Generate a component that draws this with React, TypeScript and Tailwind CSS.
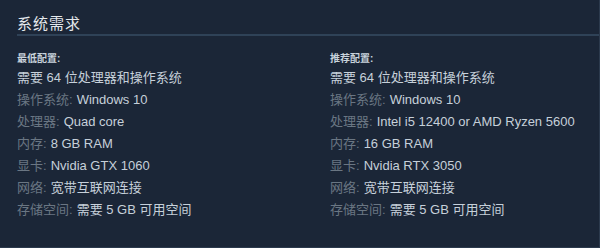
import React from 'react';

type Spec = { label?: string; value: string };

const minimum: Spec[] = [
  { value: '需要 64 位处理器和操作系统' },
  { label: '操作系统:', value: 'Windows 10' },
  { label: '处理器:', value: 'Quad core' },
  { label: '内存:', value: '8 GB RAM' },
  { label: '显卡:', value: 'Nvidia GTX 1060' },
  { label: '网络:', value: '宽带互联网连接' },
  { label: '存储空间:', value: '需要 5 GB 可用空间' },
];

const recommended: Spec[] = [
  { value: '需要 64 位处理器和操作系统' },
  { label: '操作系统:', value: 'Windows 10' },
  { label: '处理器:', value: 'Intel i5 12400 or AMD Ryzen 5600' },
  { label: '内存:', value: '16 GB RAM' },
  { label: '显卡:', value: 'Nvidia RTX 3050' },
  { label: '网络:', value: '宽带互联网连接' },
  { label: '存储空间:', value: '需要 5 GB 可用空间' },
];

const SpecColumn = ({ title, specs }: { title: string; specs: Spec[] }) => (
  <div className="flex flex-col">
    <div className="text-[10px] font-bold leading-[14px] text-[#c9d3dc] mb-[1px]">{title}</div>
    <ul className="flex flex-col">
      {specs.map((s, i) => (
        <li key={i} className="h-[22px] leading-[22px] text-[13px] whitespace-nowrap">
          {s.label && <span className="text-[#6a7683] mr-[4px]">{s.label}</span>}
          <span className="text-[#c6d0da]">{s.value}</span>
        </li>
      ))}
    </ul>
  </div>
);

const App: React.FC = () => {
  return (
    <div
      className="w-[600px] h-[248px] bg-[#1b2637] border-r border-b border-[#2c3a4d] overflow-hidden"
      style={{ fontFamily: '"Liberation Sans", "Noto Sans CJK SC", sans-serif' }}
    >
      <div className="pl-[17px] pt-[15px]">
        <h2 className="text-[15px] leading-[18px] text-[#e4e8ec] tracking-[1px]">系统需求</h2>
        <div className="mt-[1px] h-[2px] bg-[#2f4257]" />
        <div className="grid grid-cols-[313px_1fr] mt-[16px]">
          <SpecColumn title="最低配置:" specs={minimum} />
          <SpecColumn title="推荐配置:" specs={recommended} />
        </div>
      </div>
    </div>
  );
};

export default App;
